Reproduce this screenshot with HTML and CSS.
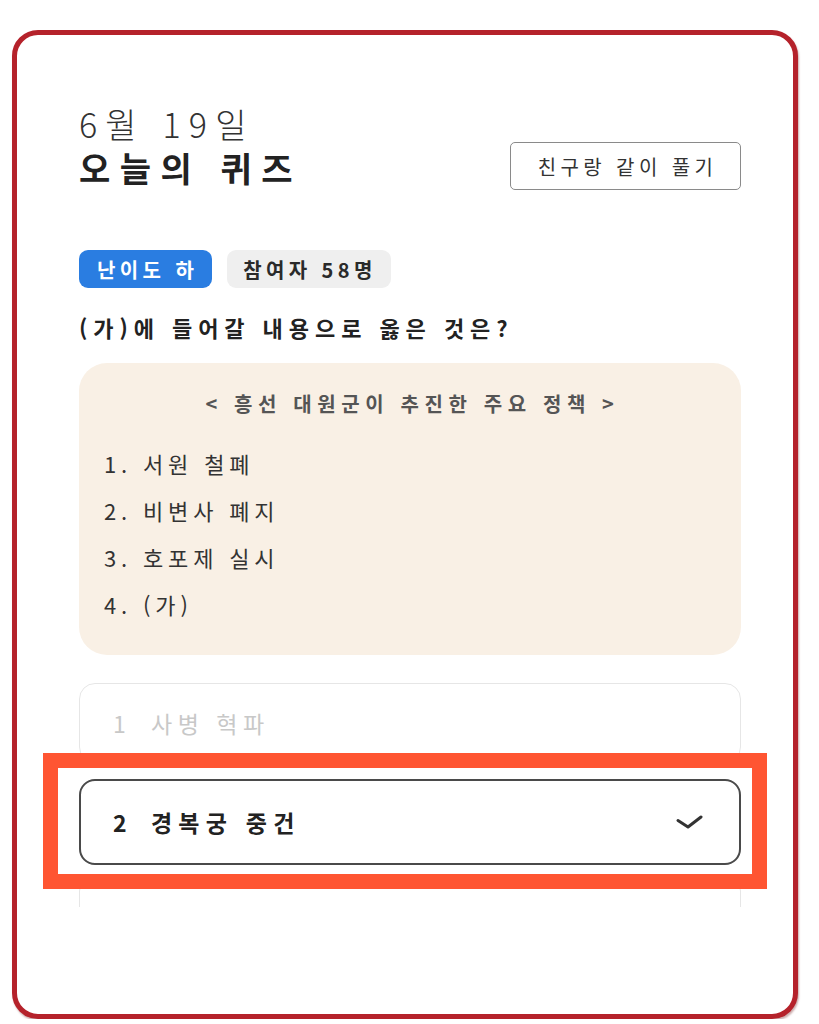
FILE: index.html
```html
<!DOCTYPE html>
<html lang="ko">
	<head>
		<meta charset="utf-8">
		<title>오늘의 퀴즈</title>
		<link rel="stylesheet" href="styles.css">
	</head>
	<body>
		<div class="frame">
			<header class="quiz-head">
				<div class="quiz-title">
					<p class="quiz-date">6월 19일</p>
					<h1>오늘의 퀴즈</h1>
				</div>
				<button class="btn-together" type="button">친구랑 같이 풀기</button>
			</header>

			<div class="tags">
				<span class="tag tag-level">난이도 하</span>
				<span class="tag tag-count">참여자 58명</span>
			</div>

			<h2 class="question">(가)에 들어갈 내용으로 옳은 것은?</h2>

			<div class="passage">
				<p class="passage-title">&lt; 흥선 대원군이 추진한 주요 정책 &gt;</p>
				<ul class="passage-list">
					<li>1. 서원 철폐</li>
					<li>2. 비변사 폐지</li>
					<li>3. 호포제 실시</li>
					<li>4. (가)</li>
				</ul>
			</div>

			<div class="choices">
				<div class="choice-list">
					<div class="choice">
						<span class="choice-num">1</span>
						<span class="choice-text">사병 혁파</span>
					</div>
					<div class="choice selected">
						<span class="choice-num">2</span>
						<span class="choice-text">경복궁 중건</span>
						<svg class="check" width="27" height="14" viewBox="0 0 27 14">
							<path d="M2 5.5 L12 12 L25 2" fill="none" stroke="#333" stroke-width="3" stroke-linecap="round" stroke-linejoin="round"/>
						</svg>
					</div>
					<div class="choice"></div>
				</div>
				<!-- annotation box over the selected answer -->
				<div class="highlight"></div>
			</div>
		</div>
	</body>
</html>
```

FILE: styles.css
```css
body {
	margin: 0;
	padding: 0;
	background: #fff;
	font-family: "Noto Sans CJK KR", "Noto Sans", sans-serif;
	color: #222;
}

.frame {
	box-sizing: border-box;
	width: 786px;
	height: 989px;
	margin: 30px 0 0 12px;
	padding: 67px 52px 0 62px;
	border: 5px solid #b5222b;
	border-radius: 26px;
	box-shadow: 1px 2px 2px rgba(110, 20, 20, 0.35);
	background: #fff;
}

.quiz-head {
	display: flex;
	justify-content: space-between;
	align-items: flex-end;
}

.quiz-date {
	margin: 0;
	font-size: 34px;
	font-weight: 300;
	line-height: 44px;
	letter-spacing: 0.24em;
	color: #333;
}

.quiz-title h1 {
	margin: 0;
	font-size: 34px;
	font-weight: 700;
	line-height: 44px;
	letter-spacing: 0.28em;
	color: #222;
}

.btn-together {
	box-sizing: border-box;
	width: 231px;
	height: 48px;
	padding: 0 0 0 4px;
	border: 1px solid #8a8a8a;
	border-radius: 5px;
	background: #fff;
	font-family: inherit;
	font-size: 20px;
	letter-spacing: 0.22em;
	color: #333;
}

.tags {
	display: flex;
	gap: 15px;
	margin-top: 60px;
}

.tag {
	display: flex;
	align-items: center;
	height: 38px;
	padding: 0 14px 0 18px;
	border-radius: 9px;
	font-size: 20px;
	font-weight: 700;
	letter-spacing: 0.22em;
}

.tag-level {
	background: #2a7de1;
	color: #fff;
}

.tag-count {
	padding-left: 16px;
	background: #efefef;
	color: #2a2a2a;
}

.question {
	margin: 24px 0 0;
	font-size: 22px;
	font-weight: 700;
	line-height: 30px;
	letter-spacing: 0.27em;
	color: #222;
}

.passage {
	box-sizing: border-box;
	height: 292px;
	margin-top: 21px;
	padding: 27px 25px 0;
	border-radius: 28px;
	background: #f9f0e5;
}

.passage-title {
	margin: 0;
	padding-left: 5px;
	text-align: center;
	font-size: 20px;
	font-weight: 700;
	line-height: 28px;
	letter-spacing: 0.28em;
	color: #555;
}

.passage-list {
	list-style: none;
	margin: 22px 0 0;
	padding: 0;
}

.passage-list li {
	font-size: 22px;
	line-height: 47px;
	letter-spacing: 0.22em;
	color: #333;
}

.choices {
	position: relative;
	margin-top: 28px;
}

.choice-list {
	display: flex;
	flex-direction: column;
	height: 224px;
	overflow: hidden;
}

.choice {
	box-sizing: border-box;
	display: flex;
	align-items: center;
	flex-shrink: 0;
	height: 80px;
	padding: 0 36px 0 33px;
	border: 1px solid #e6e6e6;
	border-radius: 16px;
	font-size: 23px;
	letter-spacing: 0.24em;
	color: #c8c8c8;
}

.choice + .choice {
	margin-top: 16px;
}

.choice.selected + .choice {
	margin-top: 10px;
}

.choice-num {
	width: 38px;
}

.choice.selected {
	height: 86px;
	padding-left: 32px;
	border: 2px solid #4a4a4a;
	font-weight: 700;
	letter-spacing: 0.27em;
	color: #222;
}

.check {
	margin-left: auto;
}

.highlight {
	position: absolute;
	left: -36px;
	top: 70px;
	box-sizing: border-box;
	width: 724px;
	height: 136px;
	border: 15px solid #ff5532;
}
```
